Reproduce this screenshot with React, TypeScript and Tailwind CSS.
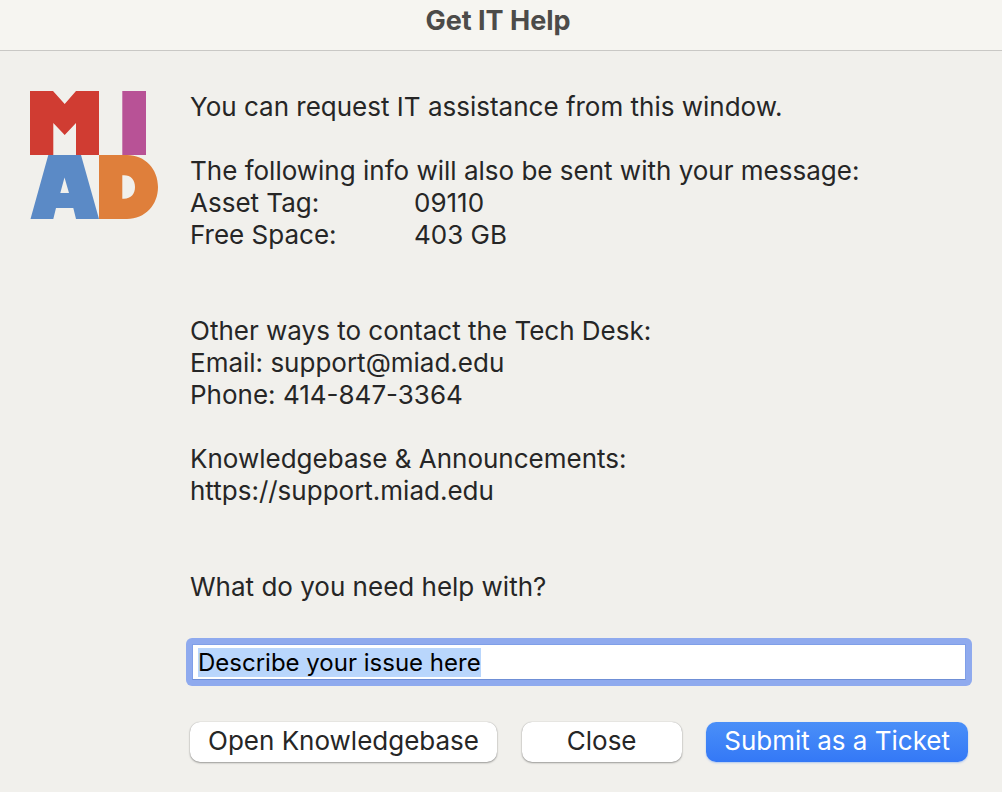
import * as React from 'react';
import { clsx } from 'clsx';

interface InfoRow {
  label: string;
  value: string;
}

const assetInfo: InfoRow[] = [
  { label: 'Asset Tag:', value: '09110' },
  { label: 'Free Space:', value: '403 GB' },
];

function MiadLogo() {
  return (
    <svg viewBox="0 0 128 128" role="img" aria-label="MIAD" className="size-32 shrink-0">
      <path fill="#d03c32" d="M0 0H23L34.7 13L46 0H69V64H46V32L34.7 44L23.3 32V64H0Z" />
      <path fill="#b85296" d="M92.3 0H116V64H92.3Z" />
      <path
        fill="#5b8ac6"
        fillRule="evenodd"
        d="M18.3 64H51L69 128H46L43.3 117H26L23.3 128H.5ZM34.5 86.5L30.3 102H39Z"
      />
      <path
        fill="#df7f3b"
        fillRule="evenodd"
        d="M69 64H97C115 64 128 78 128 96S115 128 97 128H69ZM92.3 84.3V107.7H94C101 107.7 105 103 105 96S101 84.3 94 84.3Z"
      />
    </svg>
  );
}

interface DialogButtonProps {
  children: React.ReactNode;
  type?: 'button' | 'submit';
  primary?: boolean;
}

function DialogButton({ children, type = 'button', primary = false }: DialogButtonProps) {
  return (
    <button
      type={type}
      className={clsx(
        'h-10 min-w-40 rounded-[10px] px-[18px] pb-0.5 text-[26px] leading-8 whitespace-nowrap',
        primary
          ? 'bg-linear-to-b from-[#4a8ff8] to-[#3478f6] text-white shadow-[0_1px_2px_rgba(52,120,246,0.35)]'
          : 'bg-white text-[#262626] shadow-[0_0_1px_rgba(0,0,0,0.3),0_1px_2px_rgba(0,0,0,0.35)]'
      )}
    >
      {children}
    </button>
  );
}

export default function App() {
  const issueRef = React.useRef<HTMLInputElement>(null);

  // The default text is selected so that typing replaces it
  React.useEffect(() => {
    issueRef.current?.focus();
    issueRef.current?.select();
  }, []);

  return (
    <div className="min-h-screen bg-[#f1f0ec] font-['Inter',sans-serif] text-[26px] leading-8 text-[#262626]">
      <header className="border-b border-[#c9c8c5] bg-[#f6f5f1] pt-[5px] pr-1.5 pb-[13px] text-center">
        <h1 className="text-[27px] font-bold text-[#4c4b49]">Get IT Help</h1>
      </header>

      <main className="flex items-start gap-8 pt-10 pr-[34px] pb-7 pl-[30px]">
        <MiadLogo />

        <form className="min-w-0 flex-1" onSubmit={(e) => e.preventDefault()}>
          <p>You can request IT assistance from this window.</p>

          <section className="mt-8">
            <p>The following info will also be sent with your message:</p>
            <dl className="grid grid-cols-[224px_1fr]">
              {assetInfo.map((row) => (
                <React.Fragment key={row.label}>
                  <dt>{row.label}</dt>
                  <dd>{row.value}</dd>
                </React.Fragment>
              ))}
            </dl>
          </section>

          <section className="mt-16">
            <p>Other ways to contact the Tech Desk:</p>
            <p>Email: support@miad.edu</p>
            <p>Phone: 414-847-3364</p>
          </section>

          <section className="mt-8">
            <p>Knowledgebase &amp; Announcements:</p>
            <p>https://support.miad.edu</p>
          </section>

          <label htmlFor="issue" className="mt-16 block">
            What do you need help with?
          </label>
          <div className="-mx-1 mt-[35px] rounded-md bg-[#8faaee] p-1.5">
            <input
              ref={issueRef}
              id="issue"
              type="text"
              defaultValue="Describe your issue here"
              className="block h-9 w-full border border-[#7f9fe8] border-b-[#6f8fd6] bg-white px-[5px] text-[24px] leading-[30px] text-black outline-none selection:bg-[#b9d6fc] selection:text-black"
            />
          </div>

          <div className="mt-9 flex justify-between">
            <DialogButton>Open Knowledgebase</DialogButton>
            <DialogButton>Close</DialogButton>
            <DialogButton type="submit" primary>
              Submit as a Ticket
            </DialogButton>
          </div>
        </form>
      </main>
    </div>
  );
}
